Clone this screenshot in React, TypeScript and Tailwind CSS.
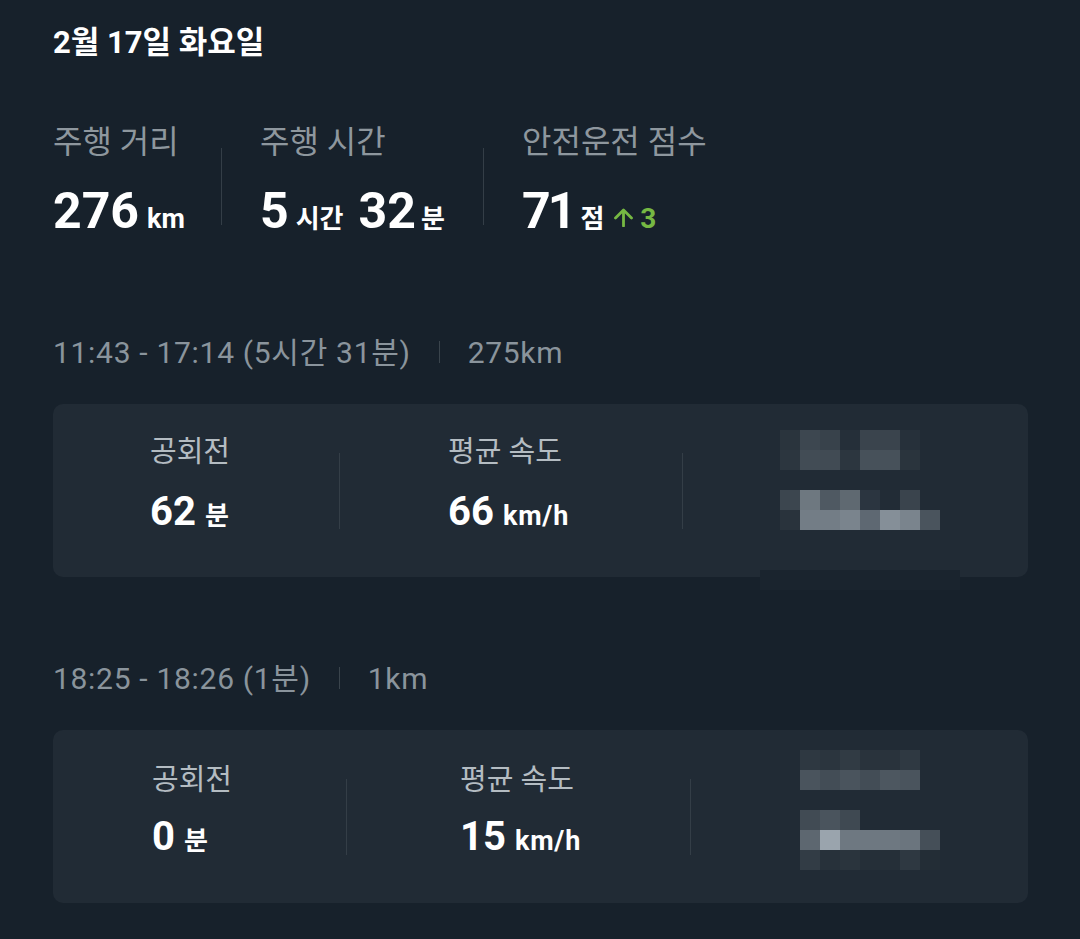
type Cell = string | null;

// Blurred mosaic blocks that hide part of each trip card (20px cells).
const mosaicA: Cell[][] = [
  ['bg-[#2a343d]', 'bg-[#3d4750]', 'bg-[#38424b]', 'bg-[#252f39]', 'bg-[#3a444d]', 'bg-[#3a444d]', 'bg-[#26303a]', null],
  ['bg-[#2c363f]', 'bg-[#424c55]', 'bg-[#414b54]', 'bg-[#2c363f]', 'bg-[#47515a]', 'bg-[#47515a]', 'bg-[#2a343d]', null],
  [null, null, null, null, null, null, null, null],
  ['bg-[#3c464f]', 'bg-[#6e7880]', 'bg-[#4f5962]', 'bg-[#5f6971]', 'bg-[#2b3540]', 'bg-[#222c36]', 'bg-[#3a444d]', null],
  ['bg-[#29333c]', 'bg-[#737d86]', 'bg-[#737d86]', 'bg-[#7a848d]', 'bg-[#5e6872]', 'bg-[#858f98]', 'bg-[#7a848d]', 'bg-[#4a545d]'],
];

const mosaicB: Cell[][] = [
  ['bg-[#2e3841]', 'bg-[#2b353e]', 'bg-[#313b44]', 'bg-[#29333c]', 'bg-[#29333c]', 'bg-[#2f3942]', null],
  ['bg-[#4a545d]', 'bg-[#434d56]', 'bg-[#4a545d]', 'bg-[#434d56]', 'bg-[#4d5760]', 'bg-[#4a545d]', null],
  [null, null, null, null, null, null, null],
  ['bg-[#414b54]', 'bg-[#4a545d]', 'bg-[#3f4952]', null, null, null, null],
  ['bg-[#5d6770]', 'bg-[#9aa4ad]', 'bg-[#6e7881]', 'bg-[#6e7881]', 'bg-[#6e7881]', 'bg-[#6b757e]', 'bg-[#454f58]'],
  ['bg-[#323c45]', 'bg-[#27313a]', 'bg-[#2a343d]', 'bg-[#252f38]', 'bg-[#252f38]', 'bg-[#2e3841]', 'bg-[#232d36]'],
];

function Mosaic({ rows }: { rows: Cell[][] }) {
  return (
    <div className="flex flex-col">
      {rows.map((row, i) => (
        <div key={i} className="flex">
          {row.map((c, j) => (
            <div key={j} className={`w-[20px] h-[20px] ${c ?? ''}`} />
          ))}
        </div>
      ))}
    </div>
  );
}

function CardStat({
  label,
  value,
  unit,
  latin,
  gap,
}: {
  label: string;
  value: string;
  unit: string;
  latin?: boolean;
  gap: string;
}) {
  return (
    <div className="flex flex-col">
      <div className="text-[29px] leading-[34px] text-[#b4bcc2]">{label}</div>
      <div className={`${gap} flex items-baseline leading-[48px] font-bold text-white`}>
        <span className="text-[40px]">{value}</span>
        <span className={`ml-[9px] leading-none ${latin ? 'text-[27px] tracking-[0.8px]' : 'text-[26px]'}`}>{unit}</span>
      </div>
    </div>
  );
}

function TripHeader({ time, distance }: { time: string; distance: string }) {
  return (
    <div className="flex items-center h-[36px] text-[30px] tracking-[0.7px] text-[#8a949c]">
      <span>{time}</span>
      <div className="w-px h-[22px] mx-[28px] bg-[#3a444c]" />
      <span>{distance}</span>
    </div>
  );
}

function UpArrow() {
  return (
    <svg width="21" height="19" viewBox="0 0 21 19" fill="none" className="ml-[9px] self-center mt-[13px]">
      <path d="M10.5 18V2.5M2.5 10 10.5 2l8 8" stroke="#76b843" strokeWidth="2.8" strokeLinecap="round" strokeLinejoin="round" />
    </svg>
  );
}

export default function App() {
  return (
    <div className="w-[1080px] h-[939px] overflow-hidden bg-[#17212b] pl-[53px] pr-[52px] pt-[24px] font-['Roboto','Noto_Sans_CJK_KR',sans-serif]">
      <h1 className="text-[31px] leading-[38px] font-bold text-white">2월 17일 화요일</h1>

      {/* daily summary */}
      <div className="mt-[61px] flex">
        <div className="w-[168px] flex flex-col">
          <div className="text-[32px] leading-[38px] text-[#8e979e]">주행 거리</div>
          <div className="mt-[22px] flex items-baseline leading-[56px] text-white font-bold">
            <span className="text-[50px]">276</span>
            <span className="ml-[8px] text-[27px] leading-none">km</span>
          </div>
        </div>
        <div className="w-px h-[77px] self-end mb-[14px] bg-[#343e47]" />
        <div className="w-[261px] pl-[38px] flex flex-col">
          <div className="text-[32px] leading-[38px] text-[#8e979e]">주행 시간</div>
          <div className="mt-[22px] flex items-baseline leading-[56px] text-white font-bold">
            <span className="text-[50px]">5</span>
            <span className="ml-[7px] text-[26px] leading-none">시간</span>
            <span className="ml-[15px] text-[50px]">32</span>
            <span className="ml-[5px] text-[26px] leading-none">분</span>
          </div>
        </div>
        <div className="w-px h-[77px] self-end mb-[14px] bg-[#343e47]" />
        <div className="pl-[38px] flex flex-col">
          <div className="text-[32px] leading-[38px] text-[#8e979e]">안전운전 점수</div>
          <div className="mt-[22px] flex items-baseline leading-[56px] text-white font-bold">
            <span className="text-[50px] tracking-[-3px]">71</span>
            <span className="ml-[7px] text-[26px] leading-none">점</span>
            <UpArrow />
            <span className="ml-[6px] text-[28px] leading-none text-[#76b843]">3</span>
          </div>
        </div>
      </div>

      {/* trip 1 */}
      <div className="mt-[95px]">
        <TripHeader time="11:43 - 17:14 (5시간 31분)" distance="275km" />
      </div>
      <div className="relative mt-[34px] h-[173px] rounded-[10px] bg-[#212b35] flex">
        <div className="w-[286px] pl-[97px] pt-[31px]">
          <CardStat label="공회전" value="62" unit="분" gap="mt-[19px]" />
        </div>
        <div className="w-px h-[76px] self-center bg-[#343e47]" />
        <div className="w-[342px] pl-[108px] pt-[31px]">
          <CardStat label="평균 속도" value="66" unit="km/h" latin gap="mt-[19px]" />
        </div>
        <div className="w-px h-[76px] self-center bg-[#343e47]" />
        <div className="pl-[97px] pt-[26px]">
          <Mosaic rows={mosaicA} />
        </div>
        <div className="absolute left-[707px] top-[166px] w-[200px] h-[20px] bg-[#1a242e]" />
      </div>

      {/* trip 2 */}
      <div className="mt-[83px]">
        <TripHeader time="18:25 - 18:26 (1분)" distance="1km" />
      </div>
      <div className="mt-[34px] h-[173px] rounded-[10px] bg-[#212b35] flex">
        <div className="w-[293px] pl-[99px] pt-[33px]">
          <CardStat label="공회전" value="0" unit="분" gap="mt-[16px]" />
        </div>
        <div className="w-px h-[76px] self-center bg-[#343e47]" />
        <div className="w-[343px] pl-[113px] pt-[33px]">
          <CardStat label="평균 속도" value="15" unit="km/h" latin gap="mt-[16px]" />
        </div>
        <div className="w-px h-[76px] self-center bg-[#343e47]" />
        <div className="pl-[109px] pt-[20px]">
          <Mosaic rows={mosaicB} />
        </div>
      </div>
    </div>
  );
}
